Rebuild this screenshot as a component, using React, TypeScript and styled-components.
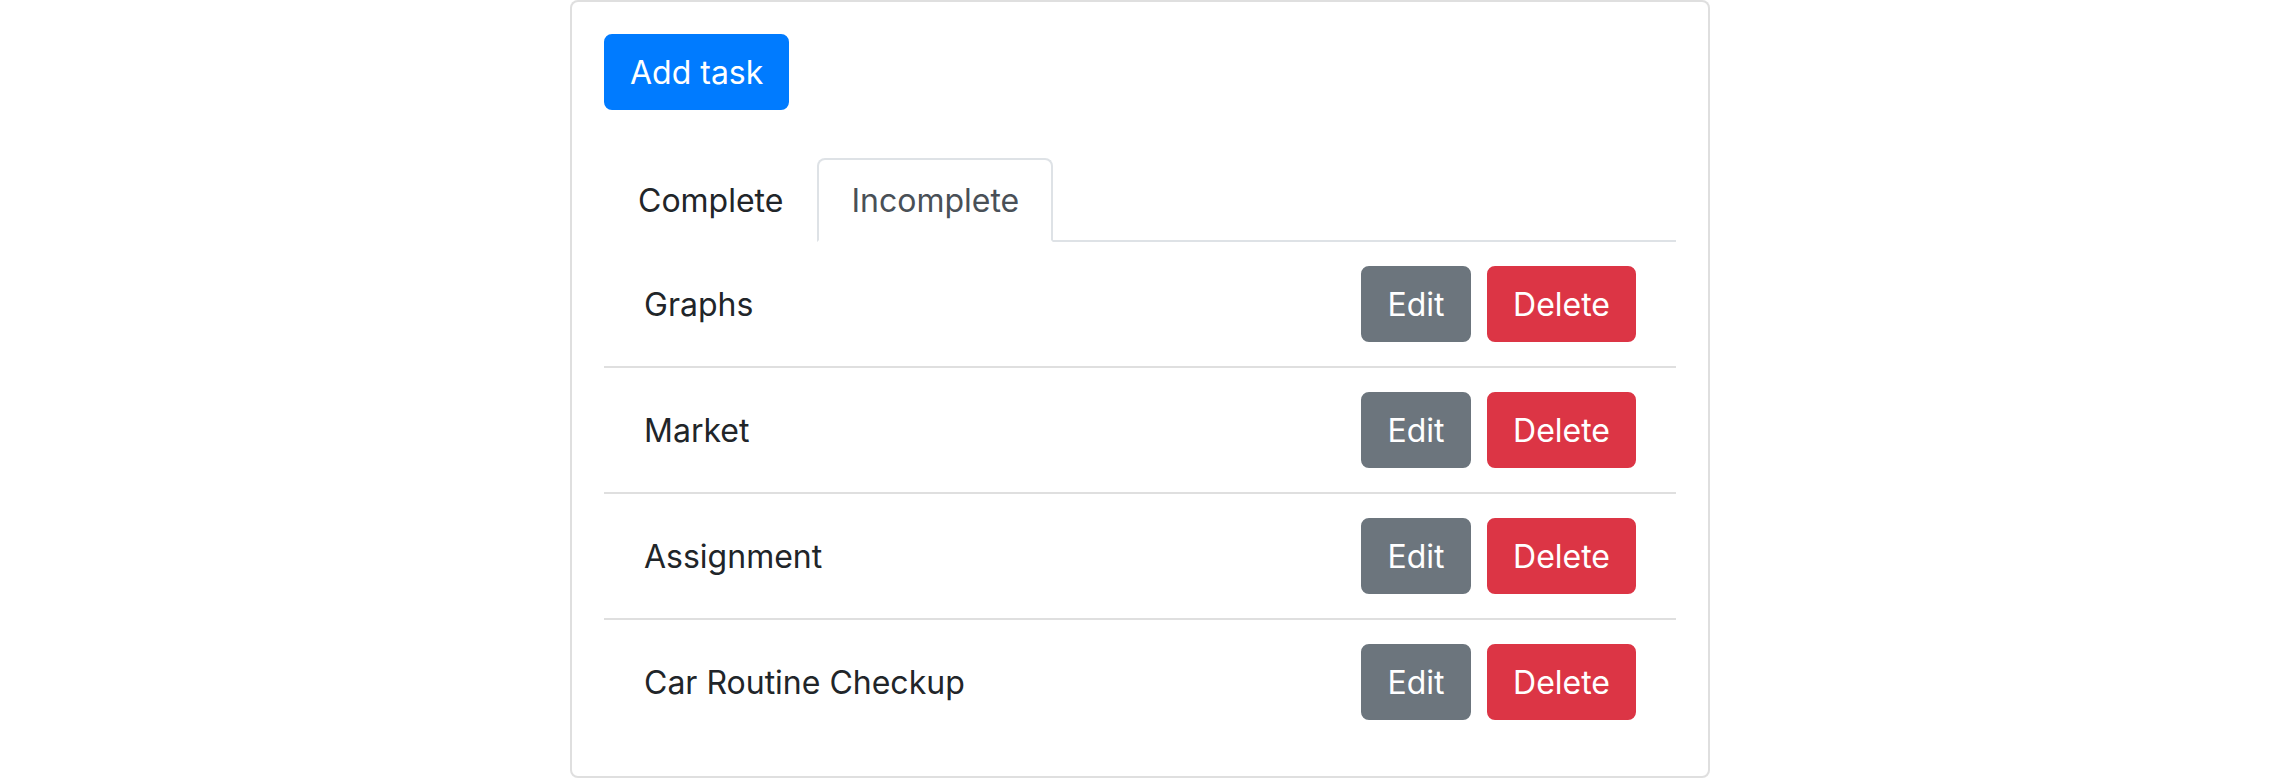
import React, { useState } from "react";
import styled, { createGlobalStyle } from "styled-components";

const GlobalStyle = createGlobalStyle`
  html, body {
    margin: 0;
    padding: 0;
    background: #ffffff;
  }
  body {
    font-family: Inter, "Noto Sans", "Liberation Sans", sans-serif;
    color: #212529;
  }
  * { box-sizing: border-box; }
`;

const Card = styled.div`
  width: 1140px;
  margin: 0 auto;
  border: 2px solid rgba(0, 0, 0, 0.125);
  border-radius: 8px;
  padding: 32px;
  background: #fff;
`;

const Button = styled.button<{ $variant: "primary" | "secondary" | "danger" }>`
  font-family: inherit;
  font-size: 32px;
  line-height: 48px;
  padding: 13px 24px 11px;
  border: 2px solid transparent;
  border-radius: 8px;
  color: #fff;
  cursor: pointer;
  min-width: ${(p) => (p.$variant === "secondary" ? "110px" : "0")};
  background: ${(p) =>
    p.$variant === "primary" ? "#007bff" : p.$variant === "secondary" ? "#6c757d" : "#dc3545"};
  border-color: ${(p) =>
    p.$variant === "primary" ? "#007bff" : p.$variant === "secondary" ? "#6c757d" : "#dc3545"};
`;

const Tabs = styled.div`
  display: flex;
  margin-top: 48px;
  border-bottom: 2px solid #dee2e6;
`;

const Tab = styled.button<{ $active?: boolean }>`
  font-family: inherit;
  font-size: 32px;
  line-height: 48px;
  padding: 17px 32px 15px;
  margin-bottom: -2px;
  background: #fff;
  border: 2px solid ${(p) => (p.$active ? "#dee2e6" : "transparent")};
  border-bottom-color: ${(p) => (p.$active ? "#fff" : "transparent")};
  border-radius: 8px 8px 0 0;
  color: ${(p) => (p.$active ? "#495057" : "#212529")};
  cursor: pointer;
`;

const List = styled.ul`
  list-style: none;
  margin: 0;
  padding: 0;
`;

const Row = styled.li`
  display: flex;
  align-items: center;
  justify-content: space-between;
  padding: 24px 40px;
  border-bottom: 2px solid rgba(0, 0, 0, 0.125);
  &:last-child {
    border-bottom: 0;
  }
`;

const Name = styled.span`
  font-size: 32px;
  line-height: 48px;
  padding-top: 2px;
  color: #212529;
`;

const Actions = styled.div`
  display: flex;
  gap: 16px;
`;

const tasks = ["Graphs", "Market", "Assignment", "Car Routine Checkup"];

export default function App() {
  const [tab, setTab] = useState("incomplete");
  return (
    <>
      <GlobalStyle />
      <Card>
        <Button $variant="primary">Add task</Button>
        <Tabs>
          <Tab $active={tab === "complete"} onClick={() => setTab("complete")}>
            Complete
          </Tab>
          <Tab $active={tab === "incomplete"} onClick={() => setTab("incomplete")}>
            Incomplete
          </Tab>
        </Tabs>
        <List>
          {tasks.map((t) => (
            <Row key={t}>
              <Name>{t}</Name>
              <Actions>
                <Button $variant="secondary">Edit</Button>
                <Button $variant="danger">Delete</Button>
              </Actions>
            </Row>
          ))}
        </List>
      </Card>
    </>
  );
}
